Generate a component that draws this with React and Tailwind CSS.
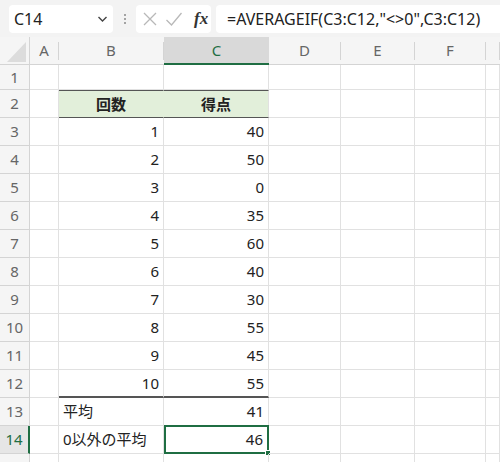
import React from 'react';

const cols = ['A', 'B', 'C', 'D', 'E', 'F', ''];
const scores = [40, 50, 0, 35, 60, 40, 30, 55, 45, 55];

const font = { fontFamily: '"Noto Sans", "Noto Sans CJK JP", sans-serif' };

const RowHead = ({ n, active, h }) => (
  <div
    className={`flex items-center justify-center border-r border-b text-[15px] ${
      active ? 'bg-[#e6e6e6] text-[#1f6e43] border-r-2 border-r-[#1f6e43] border-b-[#d4d4d4]' : 'bg-[#f5f5f5] text-[#666] border-[#d4d4d4]'
    }`}
    style={{ height: h }}
  >
    {n}
  </div>
);

const Cell = ({ children, className = '' }) => (
  <div className={`relative flex items-center border-r border-b border-[#e1e1e1] px-1 text-[15px] text-[#222] ${className}`}>
    {children}
  </div>
);

const Row = ({ n, b, c, h = 28, active, kind }) => {
  const isHead = kind === 'head';
  return (
    <div className="grid grid-cols-[30px_29px_105px_105px_72px_74px_71px_1fr]" style={{ height: h }}>
      <RowHead n={n} active={active} h={h} />
      <Cell />
      {isHead ? (
        <>
          <div className="flex items-center justify-center bg-[#e2efda] border-t border-b border-t-[#555] border-b-[#555] border-r border-r-[#e2efda] text-[15px] font-bold text-[#222]">
            {b}
          </div>
          <div className="flex items-center justify-center bg-[#e2efda] border-t border-b border-t-[#555] border-b-[#555] border-r border-r-[#e1e1e1] text-[15px] font-bold text-[#222]">
            {c}
          </div>
        </>
      ) : (
        <>
          <Cell className={`${typeof b === 'number' ? 'justify-end' : 'justify-start'} ${kind === 'last' ? 'border-b-2 border-b-[#555]' : ''}`}>{b}</Cell>
          {active ? (
            <div className="relative flex items-center justify-end border-2 border-[#1f6e43] px-1 text-[15px] text-[#222] -mt-px">
              {c}
              <span className="absolute -right-[4px] -bottom-[4px] h-[6px] w-[6px] bg-[#1f6e43] border border-white" />
            </div>
          ) : (
            <Cell className={`justify-end ${kind === 'last' ? 'border-b-2 border-b-[#555]' : ''}`}>{c}</Cell>
          )}
        </>
      )}
      <Cell />
      <Cell />
      <Cell />
      <Cell />
    </div>
  );
};

export default function App() {
  return (
    <div className="w-[500px] h-[462px] overflow-hidden bg-white" style={font}>
      {/* formula bar */}
      <div className="flex h-[37px] items-center gap-0 bg-[#f3f3f3] px-[9px] pt-[1px]">
        <div className="flex h-[28px] w-[104px] items-center justify-between rounded-[4px] bg-white pl-[5px] pr-[5px] text-[16px] text-[#222]">
          <span>C14</span>
          <svg width="11" height="8" viewBox="0 0 11 8" fill="none" stroke="#444" strokeWidth="1.4">
            <path d="M1.5 2 L5.5 6 L9.5 2" />
          </svg>
        </div>
        <div className="flex w-[23px] flex-col items-center justify-center gap-[2px]">
          <span className="h-[2px] w-[2px] rounded-full bg-[#888]" />
          <span className="h-[2px] w-[2px] rounded-full bg-[#888]" />
          <span className="h-[2px] w-[2px] rounded-full bg-[#888]" />
        </div>
        <div className="flex h-[28px] w-[75px] items-center rounded-[4px] bg-white pl-[6px]">
          <svg width="16" height="16" viewBox="0 0 16 16" fill="none" stroke="#b8b8b8" strokeWidth="1.3">
            <path d="M2 2 L14 14 M14 2 L2 14" />
          </svg>
          <svg className="ml-[7px]" width="18" height="16" viewBox="0 0 18 16" fill="none" stroke="#b8b8b8" strokeWidth="1.3">
            <path d="M1.5 9 L6.5 14 L16.5 2" />
          </svg>
          <span
            className="ml-[11px] text-[17px] italic font-bold text-[#333]"
            style={{ fontFamily: '"Liberation Serif", serif' }}
          >
            fx
          </span>
        </div>
        <div className="ml-[5px] flex h-[28px] flex-1 items-center rounded-l-[4px] bg-white pl-[11px] text-[16px] text-[#222] -mr-[9px]">
          =AVERAGEIF(C3:C12,"&lt;&gt;0",C3:C12)
        </div>
      </div>

      {/* column headers */}
      <div className="grid h-[28px] grid-cols-[30px_29px_105px_105px_72px_74px_71px_1fr] bg-[#f5f5f5]">
        <div className="flex items-end justify-end border-r border-b border-[#d4d4d4] pb-[2px] pr-[3px]">
          <svg width="19" height="20" viewBox="0 0 19 20">
            <path d="M19 0 L19 20 L0 20 Z" fill="#dcdcdc" />
          </svg>
        </div>
        {cols.map((c, i) =>
          c === 'C' ? (
            <div key={i} className="flex items-center justify-center bg-[#d9d9d9] border-b-2 border-b-[#1f6e43] text-[15px] text-[#1f6e43]">
              {c}
            </div>
          ) : (
            <div key={i} className="flex items-center justify-center border-b border-[#d4d4d4] text-[15px] text-[#666]">
              <span className="flex-1 text-center">{c}</span>
              <span className="h-[18px] w-px bg-[#d4d4d4]" />
            </div>
          )
        )}
      </div>

      <Row n={1} h={25} />
      <Row n={2} b="回数" c="得点" kind="head" />
      {scores.map((s, i) => (
        <Row key={i} n={i + 3} b={i + 1} c={s} kind={i === 9 ? 'last' : undefined} />
      ))}
      <Row n={13} b="平均" c={41} />
      <Row n={14} b="0以外の平均" c={46} active />
      <Row n={15} />
    </div>
  );
}
